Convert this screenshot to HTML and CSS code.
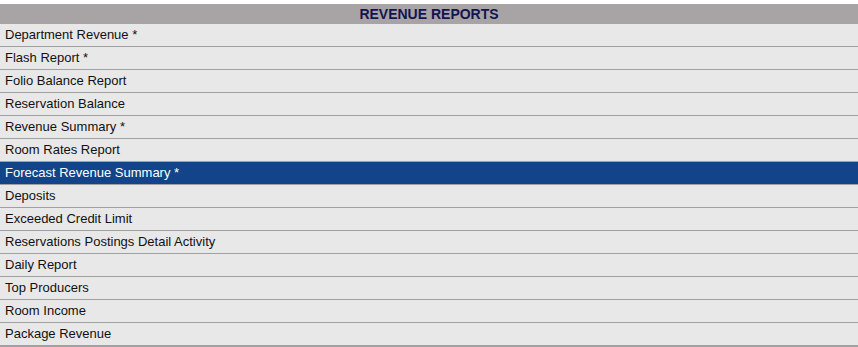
FILE: index.html
```html
<!DOCTYPE html>
<html lang="en">
<head>
    <meta charset="UTF-8">
    <title>Revenue Reports</title>
    <link rel="stylesheet" href="styles.css">
</head>
<body>
    <div class="report-list">
        <div class="report-header">REVENUE REPORTS</div>
        <div class="report-item">Department Revenue *</div>
        <div class="report-item">Flash Report *</div>
        <div class="report-item">Folio Balance Report</div>
        <div class="report-item">Reservation Balance</div>
        <div class="report-item">Revenue Summary *</div>
        <div class="report-item">Room Rates Report</div>
        <div class="report-item selected">Forecast Revenue Summary *</div>
        <div class="report-item">Deposits</div>
        <div class="report-item">Exceeded Credit Limit</div>
        <div class="report-item">Reservations Postings Detail Activity</div>
        <div class="report-item">Daily Report</div>
        <div class="report-item">Top Producers</div>
        <div class="report-item">Room Income</div>
        <div class="report-item">Package Revenue</div>
    </div>
</body>
</html>
```

FILE: styles.css
```css
body {
    margin: 4px 0 0 0;
    font-family: Arial, "Liberation Sans", sans-serif;
    background-color: #fff;
}
.report-list {
    display: flex;
    flex-direction: column;
}
.report-header {
    height: 20px;
    line-height: 20px;
    background-color: #a8a4a6;
    color: #141450;
    font-weight: bold;
    font-size: 14px;
    text-align: center;
}
.report-item {
    height: 22px;
    line-height: 22px;
    padding-left: 5px;
    background-color: #e8e8e8;
    color: #111;
    font-size: 13px;
    border-bottom: 1px solid #a0a0a0;
}
.report-item:last-child {
    border-bottom-width: 2px;
}
.report-item.selected {
    background-color: #134388;
    color: #fff;
}
```
